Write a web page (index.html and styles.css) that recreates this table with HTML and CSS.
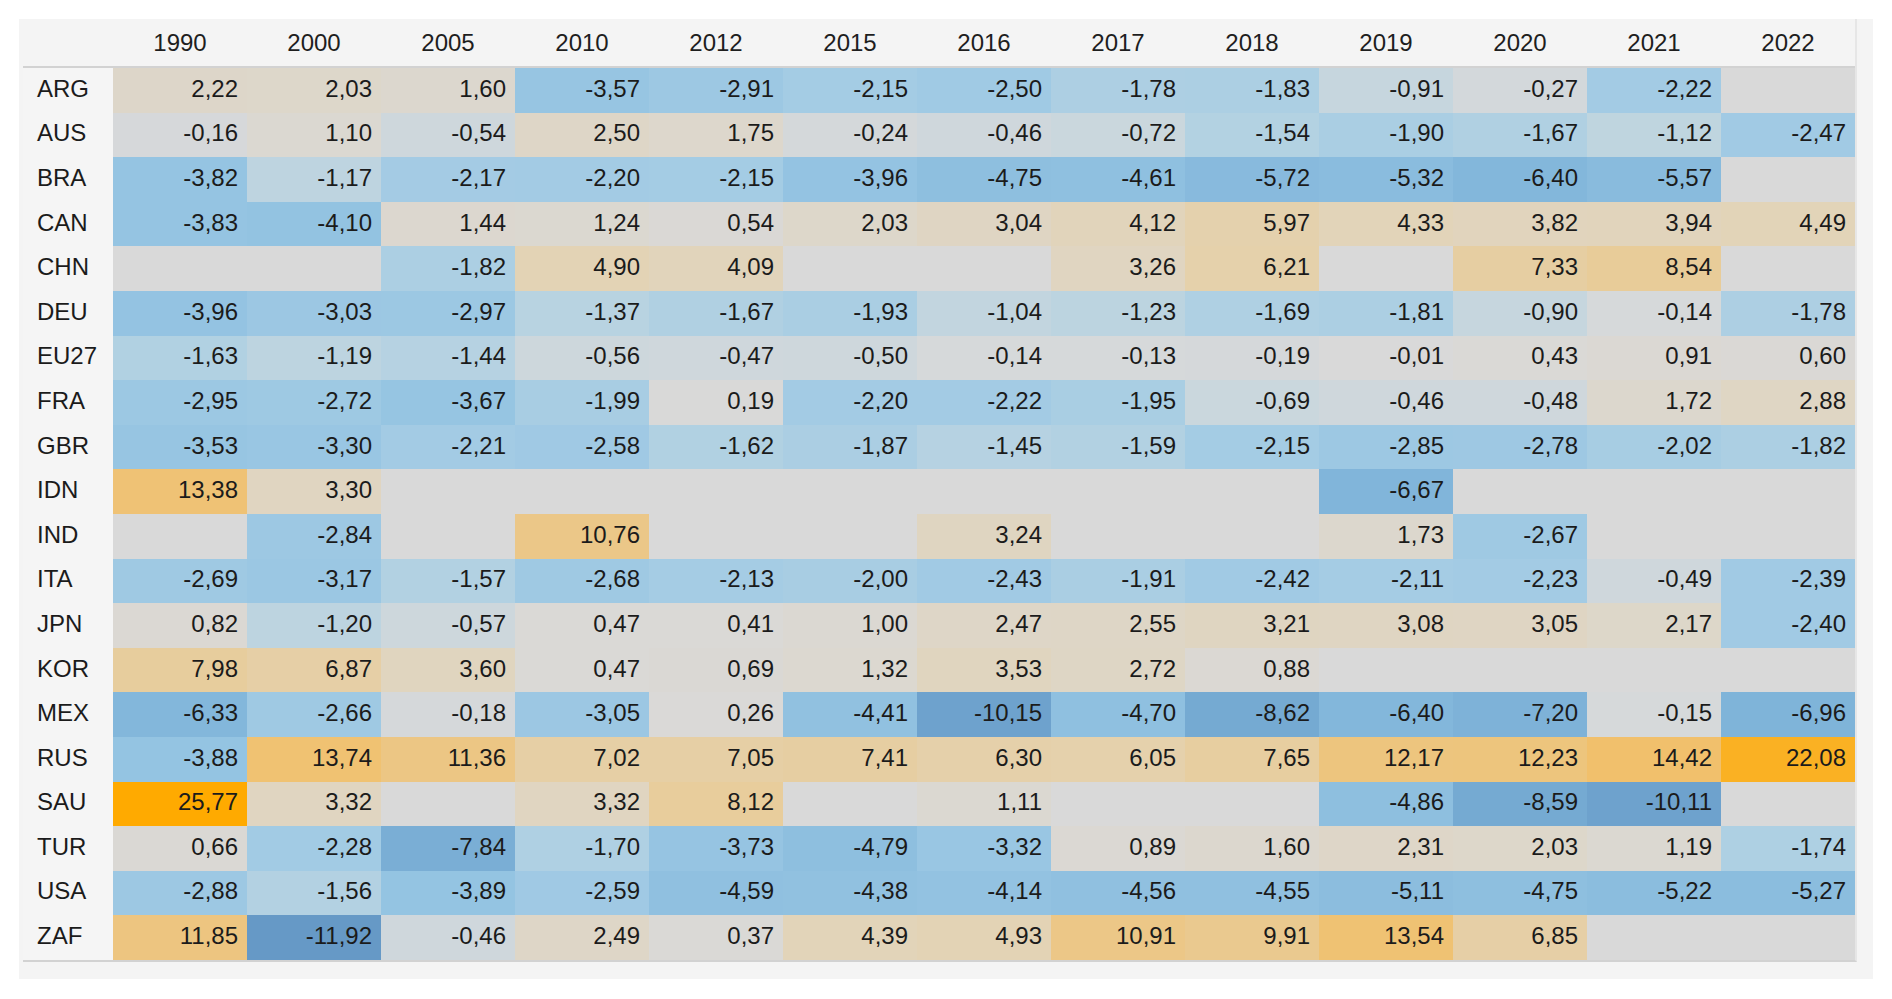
FILE: index.html
```html
<!DOCTYPE html>
<html lang="en">
<head>
<meta charset="utf-8">
<title>Heatmap</title>
<link rel="stylesheet" href="styles.css">
<script src="script.js" defer></script>
</head>
<body>
<div class="panel">
  <div class="heat">
    <div class="hcell corner"></div>
    <div class="hcell">1990</div><div class="hcell">2000</div><div class="hcell">2005</div><div class="hcell">2010</div><div class="hcell">2012</div><div class="hcell">2015</div><div class="hcell">2016</div><div class="hcell">2017</div><div class="hcell">2018</div><div class="hcell">2019</div><div class="hcell">2020</div><div class="hcell">2021</div><div class="hcell">2022</div>

    <div class="label">ARG</div>
    <div class="cell">2,22</div><div class="cell">2,03</div><div class="cell">1,60</div><div class="cell">-3,57</div><div class="cell">-2,91</div><div class="cell">-2,15</div><div class="cell">-2,50</div><div class="cell">-1,78</div><div class="cell">-1,83</div><div class="cell">-0,91</div><div class="cell">-0,27</div><div class="cell">-2,22</div><div class="cell"></div>

    <div class="label">AUS</div>
    <div class="cell">-0,16</div><div class="cell">1,10</div><div class="cell">-0,54</div><div class="cell">2,50</div><div class="cell">1,75</div><div class="cell">-0,24</div><div class="cell">-0,46</div><div class="cell">-0,72</div><div class="cell">-1,54</div><div class="cell">-1,90</div><div class="cell">-1,67</div><div class="cell">-1,12</div><div class="cell">-2,47</div>

    <div class="label">BRA</div>
    <div class="cell">-3,82</div><div class="cell">-1,17</div><div class="cell">-2,17</div><div class="cell">-2,20</div><div class="cell">-2,15</div><div class="cell">-3,96</div><div class="cell">-4,75</div><div class="cell">-4,61</div><div class="cell">-5,72</div><div class="cell">-5,32</div><div class="cell">-6,40</div><div class="cell">-5,57</div><div class="cell"></div>

    <div class="label">CAN</div>
    <div class="cell">-3,83</div><div class="cell">-4,10</div><div class="cell">1,44</div><div class="cell">1,24</div><div class="cell">0,54</div><div class="cell">2,03</div><div class="cell">3,04</div><div class="cell">4,12</div><div class="cell">5,97</div><div class="cell">4,33</div><div class="cell">3,82</div><div class="cell">3,94</div><div class="cell">4,49</div>

    <div class="label">CHN</div>
    <div class="cell"></div><div class="cell"></div><div class="cell">-1,82</div><div class="cell">4,90</div><div class="cell">4,09</div><div class="cell"></div><div class="cell"></div><div class="cell">3,26</div><div class="cell">6,21</div><div class="cell"></div><div class="cell">7,33</div><div class="cell">8,54</div><div class="cell"></div>

    <div class="label">DEU</div>
    <div class="cell">-3,96</div><div class="cell">-3,03</div><div class="cell">-2,97</div><div class="cell">-1,37</div><div class="cell">-1,67</div><div class="cell">-1,93</div><div class="cell">-1,04</div><div class="cell">-1,23</div><div class="cell">-1,69</div><div class="cell">-1,81</div><div class="cell">-0,90</div><div class="cell">-0,14</div><div class="cell">-1,78</div>

    <div class="label">EU27</div>
    <div class="cell">-1,63</div><div class="cell">-1,19</div><div class="cell">-1,44</div><div class="cell">-0,56</div><div class="cell">-0,47</div><div class="cell">-0,50</div><div class="cell">-0,14</div><div class="cell">-0,13</div><div class="cell">-0,19</div><div class="cell">-0,01</div><div class="cell">0,43</div><div class="cell">0,91</div><div class="cell">0,60</div>

    <div class="label">FRA</div>
    <div class="cell">-2,95</div><div class="cell">-2,72</div><div class="cell">-3,67</div><div class="cell">-1,99</div><div class="cell">0,19</div><div class="cell">-2,20</div><div class="cell">-2,22</div><div class="cell">-1,95</div><div class="cell">-0,69</div><div class="cell">-0,46</div><div class="cell">-0,48</div><div class="cell">1,72</div><div class="cell">2,88</div>

    <div class="label">GBR</div>
    <div class="cell">-3,53</div><div class="cell">-3,30</div><div class="cell">-2,21</div><div class="cell">-2,58</div><div class="cell">-1,62</div><div class="cell">-1,87</div><div class="cell">-1,45</div><div class="cell">-1,59</div><div class="cell">-2,15</div><div class="cell">-2,85</div><div class="cell">-2,78</div><div class="cell">-2,02</div><div class="cell">-1,82</div>

    <div class="label">IDN</div>
    <div class="cell">13,38</div><div class="cell">3,30</div><div class="cell"></div><div class="cell"></div><div class="cell"></div><div class="cell"></div><div class="cell"></div><div class="cell"></div><div class="cell"></div><div class="cell">-6,67</div><div class="cell"></div><div class="cell"></div><div class="cell"></div>

    <div class="label">IND</div>
    <div class="cell"></div><div class="cell">-2,84</div><div class="cell"></div><div class="cell">10,76</div><div class="cell"></div><div class="cell"></div><div class="cell">3,24</div><div class="cell"></div><div class="cell"></div><div class="cell">1,73</div><div class="cell">-2,67</div><div class="cell"></div><div class="cell"></div>

    <div class="label">ITA</div>
    <div class="cell">-2,69</div><div class="cell">-3,17</div><div class="cell">-1,57</div><div class="cell">-2,68</div><div class="cell">-2,13</div><div class="cell">-2,00</div><div class="cell">-2,43</div><div class="cell">-1,91</div><div class="cell">-2,42</div><div class="cell">-2,11</div><div class="cell">-2,23</div><div class="cell">-0,49</div><div class="cell">-2,39</div>

    <div class="label">JPN</div>
    <div class="cell">0,82</div><div class="cell">-1,20</div><div class="cell">-0,57</div><div class="cell">0,47</div><div class="cell">0,41</div><div class="cell">1,00</div><div class="cell">2,47</div><div class="cell">2,55</div><div class="cell">3,21</div><div class="cell">3,08</div><div class="cell">3,05</div><div class="cell">2,17</div><div class="cell">-2,40</div>

    <div class="label">KOR</div>
    <div class="cell">7,98</div><div class="cell">6,87</div><div class="cell">3,60</div><div class="cell">0,47</div><div class="cell">0,69</div><div class="cell">1,32</div><div class="cell">3,53</div><div class="cell">2,72</div><div class="cell">0,88</div><div class="cell"></div><div class="cell"></div><div class="cell"></div><div class="cell"></div>

    <div class="label">MEX</div>
    <div class="cell">-6,33</div><div class="cell">-2,66</div><div class="cell">-0,18</div><div class="cell">-3,05</div><div class="cell">0,26</div><div class="cell">-4,41</div><div class="cell">-10,15</div><div class="cell">-4,70</div><div class="cell">-8,62</div><div class="cell">-6,40</div><div class="cell">-7,20</div><div class="cell">-0,15</div><div class="cell">-6,96</div>

    <div class="label">RUS</div>
    <div class="cell">-3,88</div><div class="cell">13,74</div><div class="cell">11,36</div><div class="cell">7,02</div><div class="cell">7,05</div><div class="cell">7,41</div><div class="cell">6,30</div><div class="cell">6,05</div><div class="cell">7,65</div><div class="cell">12,17</div><div class="cell">12,23</div><div class="cell">14,42</div><div class="cell">22,08</div>

    <div class="label">SAU</div>
    <div class="cell">25,77</div><div class="cell">3,32</div><div class="cell"></div><div class="cell">3,32</div><div class="cell">8,12</div><div class="cell"></div><div class="cell">1,11</div><div class="cell"></div><div class="cell"></div><div class="cell">-4,86</div><div class="cell">-8,59</div><div class="cell">-10,11</div><div class="cell"></div>

    <div class="label">TUR</div>
    <div class="cell">0,66</div><div class="cell">-2,28</div><div class="cell">-7,84</div><div class="cell">-1,70</div><div class="cell">-3,73</div><div class="cell">-4,79</div><div class="cell">-3,32</div><div class="cell">0,89</div><div class="cell">1,60</div><div class="cell">2,31</div><div class="cell">2,03</div><div class="cell">1,19</div><div class="cell">-1,74</div>

    <div class="label">USA</div>
    <div class="cell">-2,88</div><div class="cell">-1,56</div><div class="cell">-3,89</div><div class="cell">-2,59</div><div class="cell">-4,59</div><div class="cell">-4,38</div><div class="cell">-4,14</div><div class="cell">-4,56</div><div class="cell">-4,55</div><div class="cell">-5,11</div><div class="cell">-4,75</div><div class="cell">-5,22</div><div class="cell">-5,27</div>

    <div class="label">ZAF</div>
    <div class="cell">11,85</div><div class="cell">-11,92</div><div class="cell">-0,46</div><div class="cell">2,49</div><div class="cell">0,37</div><div class="cell">4,39</div><div class="cell">4,93</div><div class="cell">10,91</div><div class="cell">9,91</div><div class="cell">13,54</div><div class="cell">6,85</div><div class="cell"></div><div class="cell"></div>
  </div>
</div>
</body>
</html>
```

FILE: styles.css
```css
* {
  box-sizing: border-box;
}

html, body {
  margin: 0;
  padding: 0;
  background: #ffffff;
}

body {
  font-family: "Liberation Sans", Arial, sans-serif;
  font-size: 24px;
  color: #1b1b1b;
}

.panel {
  margin: 19px 0 0 19px;
  width: 1854px;
  height: 960px;
  padding: 0 16px 0 4px;
  background: #f4f4f4;
}

.heat {
  display: grid;
  grid-template-columns: 90px repeat(13, 134px);
  grid-template-rows: 49px repeat(20, 44.6px);
  width: 1834px;
  border-bottom: 2px solid #d2d2d2;
  border-right: 2px solid #e6e6e6;
}

.hcell {
  display: flex;
  align-items: center;
  justify-content: center;
  padding-top: 0;
  border-bottom: 2px solid #d2d2d2;
  color: #1e1e1e;
}

.label {
  display: flex;
  align-items: center;
  padding: 0 0 3px 14px;
  background: #f5f5f5;
}

.cell {
  display: flex;
  align-items: center;
  justify-content: flex-end;
  padding: 0 9px 3px 0;
  background: #d9d9d9;
  white-space: nowrap;
}
```

FILE: script.js
```js
(function () {
  var NEG = [
    [0, [217, 217, 217]],
    [0.9, [198, 214, 222]],
    [1.5, [180, 210, 226]],
    [2.2, [163, 203, 228]],
    [3.8, [149, 196, 226]],
    [6.4, [131, 183, 219]],
    [8.6, [117, 170, 210]],
    [10.1, [110, 162, 205]],
    [11.92, [102, 153, 198]]
  ];
  var POS = [
    [0, [217, 217, 217]],
    [1, [219, 216, 210]],
    [5, [227, 211, 180]],
    [14, [240, 193, 112]],
    [25.77, [255, 170, 0]]
  ];
  function interp(stops, x) {
    if (x <= stops[0][0]) return stops[0][1];
    for (var i = 1; i < stops.length; i++) {
      if (x <= stops[i][0]) {
        var a = stops[i - 1], b = stops[i];
        var t = (x - a[0]) / (b[0] - a[0]);
        return [0, 1, 2].map(function (k) {
          return Math.round(a[1][k] + (b[1][k] - a[1][k]) * t);
        });
      }
    }
    return stops[stops.length - 1][1];
  }
  var cells = document.querySelectorAll('.cell');
  cells.forEach(function (c) {
    var s = c.textContent.trim();
    if (!s) return;
    var v = parseFloat(s.replace(',', '.'));
    var rgb = v < 0 ? interp(NEG, -v) : interp(POS, v);
    c.style.backgroundColor = 'rgb(' + rgb.join(',') + ')';
  });
})();
```
